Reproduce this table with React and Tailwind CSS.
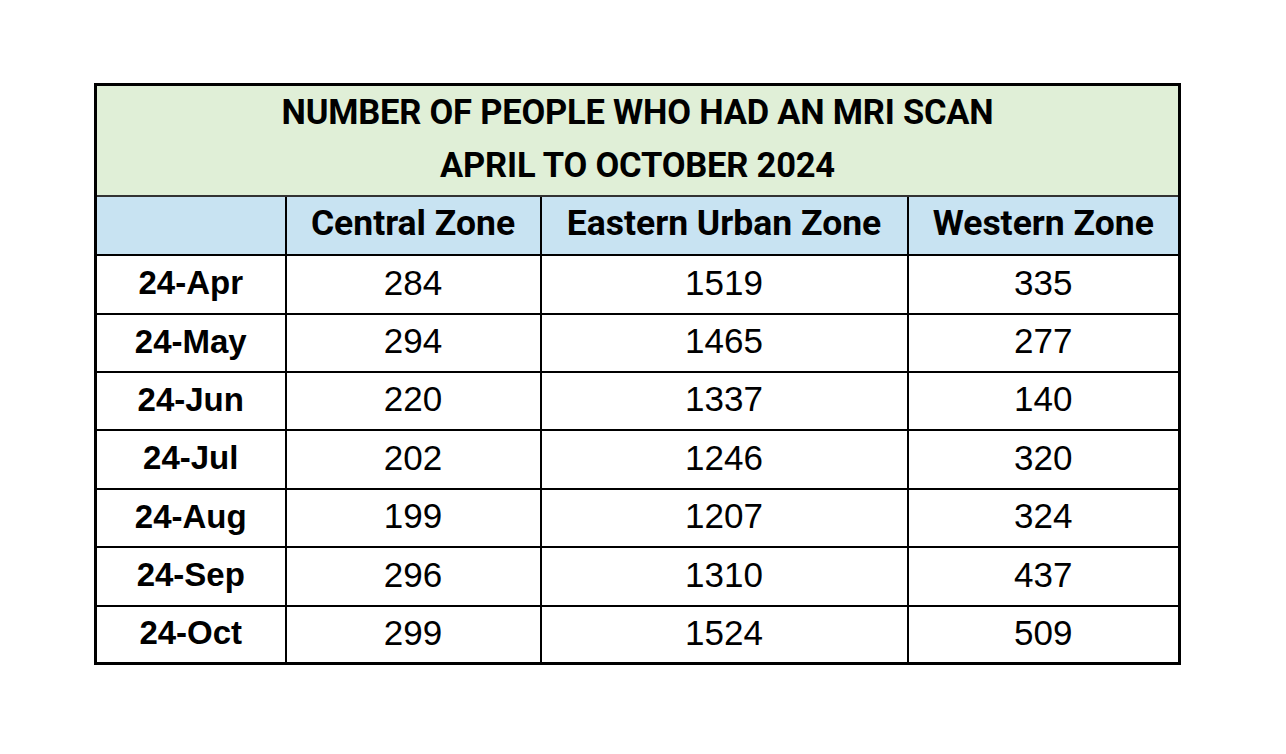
const rows = [
  ["24-Apr", 284, 1519, 335],
  ["24-May", 294, 1465, 277],
  ["24-Jun", 220, 1337, 140],
  ["24-Jul", 202, 1246, 320],
  ["24-Aug", 199, 1207, 324],
  ["24-Sep", 296, 1310, 437],
  ["24-Oct", 299, 1524, 509],
];

const zones = ["Central Zone", "Eastern Urban Zone", "Western Zone"];

export default function App() {
  return (
    <div className="min-h-screen bg-white pt-[83px] pl-[94px]">
      <table className="border-collapse border-[3px] border-black table-fixed w-[1084px]">
        <colgroup>
          <col className="w-[190px]" />
          <col className="w-[255px]" />
          <col className="w-[367px]" />
          <col className="w-[272px]" />
        </colgroup>
        <thead>
          {/* title band */}
          <tr className="bg-[#e0efd7]">
            <th
              colSpan={4}
              className="pb-[3px] border-b-2 border-[#333] text-center font-['Roboto',sans-serif] font-bold text-[34.5px] leading-[53px] tracking-[-0.2px] text-black"
            >
              <div>NUMBER OF PEOPLE WHO HAD AN MRI SCAN</div>
              <div>APRIL TO OCTOBER 2024</div>
            </th>
          </tr>
          <tr className="bg-[#c8e3f2]">
            <th className="h-[58px] border-2 border-black"></th>
            {zones.map((z) => (
              <th
                key={z}
                className="h-[58px] pb-[4px] border-2 border-black text-center font-['Roboto',sans-serif] font-bold text-[35.5px] text-black"
              >
                {z}
              </th>
            ))}
          </tr>
        </thead>
        <tbody>
          {rows.map((r) => (
            <tr key={r[0]} className="h-[58.4px]">
              <td className="pb-[3px] border-2 border-black text-center font-['Liberation_Sans',Arial,sans-serif] font-bold text-[33px] text-black">
                {r[0]}
              </td>
              {r.slice(1).map((n, i) => (
                <td
                  key={i}
                  className="pb-[3px] border-2 border-black text-center font-['Liberation_Sans',Arial,sans-serif] text-[35px] text-black"
                >
                  {n}
                </td>
              ))}
            </tr>
          ))}
        </tbody>
      </table>
    </div>
  );
}
